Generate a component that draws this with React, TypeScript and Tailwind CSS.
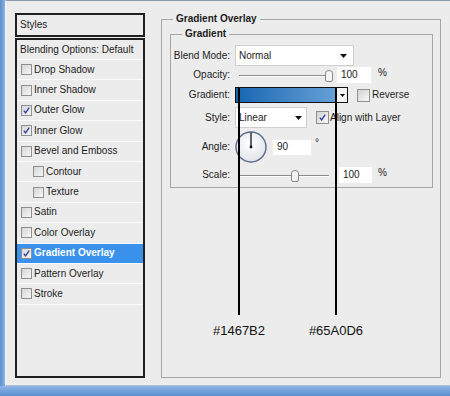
import React from "react";

type Item = { label: string; checked?: boolean; indent?: boolean; active?: boolean };

const items: Item[] = [
  { label: "Drop Shadow" },
  { label: "Inner Shadow" },
  { label: "Outer Glow", checked: true },
  { label: "Inner Glow", checked: true },
  { label: "Bevel and Emboss" },
  { label: "Contour", indent: true },
  { label: "Texture", indent: true },
  { label: "Satin" },
  { label: "Color Overlay" },
  { label: "Gradient Overlay", checked: true, active: true },
  { label: "Pattern Overlay" },
  { label: "Stroke" },
];

const CheckMark = () => (
  <svg viewBox="0 0 11 11" className="size-full">
    <path d="M2.2 5.6 L4.4 8.4 L8.8 2" fill="none" stroke="#2c3c9a" strokeWidth="1.6" />
  </svg>
);

const SmallBox = ({ checked }: { checked?: boolean }) => (
  <span className="flex size-[11px] shrink-0 border border-[#8f9090] bg-gradient-to-br from-[#d6d6d6] to-[#f6f6f6]">
    {checked && <CheckMark />}
  </span>
);

const BigBox = ({ checked }: { checked?: boolean }) => (
  <span className="flex size-[13px] shrink-0 border border-[#8f9090] bg-gradient-to-br from-[#d2d2d2] to-[#f8f8f8] p-[1px]">
    {checked && <CheckMark />}
  </span>
);

const Arrow = () => (
  <svg width="7" height="4" viewBox="0 0 7 4">
    <polygon points="0,0 7,0 3.5,4" fill="#111" />
  </svg>
);

// slider thumb, the little rounded knob
const Thumb = () => (
  <svg width="8" height="12" viewBox="0 0 8 12">
    <path d="M0.5 3 Q0.5 0.5 4 0.5 Q7.5 0.5 7.5 3 L7.5 10 Q7.5 11.5 6 11.5 L2 11.5 Q0.5 11.5 0.5 10 Z" fill="#f4f4f4" stroke="#8a8a8a" />
  </svg>
);

const Slider = ({ width, at }: { width: string; at: string }) => (
  <div className={`relative h-full ${width}`}>
    <div className="absolute left-0 right-0 top-[8px] h-[2px] border-t border-[#8c8c8c] border-b border-b-white" />
    <div className={`absolute top-[3px] ${at}`}>
      <Thumb />
    </div>
  </div>
);

const Label = ({ children }: { children: React.ReactNode }) => (
  <span className="w-[60px] shrink-0 pr-[1px] text-right">{children}</span>
);

export default function App() {
  return (
    <div className="flex h-[396px] w-[450px] flex-col overflow-hidden bg-[#6a9bd3] font-['Liberation_Sans',Arial,sans-serif] text-[10px] leading-[12px] text-[#1c1c1c]">
      <div className="flex h-[386px]">
        <div className="w-[5px] bg-gradient-to-r from-[#5b8fcd] to-[#8bb3e2]" />
        <div className="flex flex-1 border-t border-[#8b9aab] border-l border-l-[#f4f4f4] border-b border-b-[#b6c2cf] bg-[#ececec] pl-[9px] pt-[12px] pb-[7px]">
          {/* left: styles list */}
          <div className="flex w-[130px] flex-col">
            <div className="flex h-[24px] items-center border-2 border-[#202020] pl-[3px]">Styles</div>
            <div className="mt-[1px] flex flex-1 flex-col border-2 border-[#202020]">
              <div className="flex h-[20px] items-center border-b border-[#fafafa] pl-[3px]">Blending Options: Default</div>
              {items.map((it) => (
                <div
                  key={it.label}
                  className={`flex h-[20.4px] items-center gap-[2px] border-b border-[#fafafa] ${it.indent ? "pl-[16px]" : "pl-[4px]"} ${it.active ? "bg-[#3a92ec] font-bold text-white" : ""}`}
                >
                  <SmallBox checked={it.checked} />
                  <span>{it.label}</span>
                </div>
              ))}
            </div>
          </div>

          {/* right: gradient overlay panel */}
          <fieldset className="ml-[16px] w-[280px] border border-[#a6a6a6]">
            <legend className="ml-[11px] px-[3px] font-bold leading-[12px]">Gradient Overlay</legend>
            <div className="pl-[8px] pr-[7px] pt-[3px]">
              <fieldset className="border border-[#a6a6a6]">
                <legend className="ml-[11px] px-[3px] font-bold leading-[12px]">Gradient</legend>
                <div className="flex flex-col pt-[5px] pb-[4px]">
                  <div className="flex h-[21px] items-center">
                    <Label>Blend Mode:</Label>
                    <div className="ml-[4px] flex h-full w-[119px] items-center justify-between border border-[#cfcfcf] bg-white pl-[3px] pr-[6px]">
                      <span>Normal</span>
                      <Arrow />
                    </div>
                  </div>

                  <div className="mt-[1px] flex h-[16px] items-center">
                    <Label>Opacity:</Label>
                    <div className="ml-[8px] flex h-full">
                      <Slider width="w-[94px]" at="left-[86px]" />
                    </div>
                    <div className="ml-[4px] flex h-full w-[34px] items-center bg-white pl-[4px]">100</div>
                    <span className="ml-[7px] self-start">%</span>
                  </div>

                  <div className="mt-[4px] flex h-[16px] items-center">
                    <Label>Gradient:</Label>
                    <div className="relative ml-[4px] flex h-full w-[113px] border border-[#111]">
                      <div className="flex-1 bg-gradient-to-r from-[#1467B2] to-[#65A0D6]" />
                      <div className="flex w-[11px] items-center justify-center border-l border-[#444] bg-[#f4f4f4]">
                        <svg width="5" height="3" viewBox="0 0 5 3">
                          <polygon points="0,0 5,0 2.5,3" fill="#111" />
                        </svg>
                      </div>
                      <div className="absolute left-[2px] top-0 z-10 h-[227px] w-[1.5px] bg-black" />
                      <div className="absolute left-[99px] top-0 z-10 h-[227px] w-[1.5px] bg-black" />
                      <span className="absolute left-[3px] top-[235px] -translate-x-1/2 whitespace-nowrap text-[13px] leading-[15px] text-[#111]">#1467B2</span>
                      <span className="absolute left-[100px] top-[235px] -translate-x-1/2 whitespace-nowrap text-[13px] leading-[15px] text-[#111]">#65A0D6</span>
                    </div>
                    <span className="ml-[9px]">
                      <BigBox />
                    </span>
                    <span className="ml-[2px]">Reverse</span>
                  </div>

                  <div className="mt-[4px] flex h-[21px] items-center">
                    <Label>Style:</Label>
                    <div className="ml-[4px] flex h-full w-[72px] items-center justify-between border border-[#cfcfcf] bg-white pl-[3px] pr-[4px]">
                      <span>Linear</span>
                      <Arrow />
                    </div>
                    <span className="ml-[9px]">
                      <BigBox checked />
                    </span>
                    <span className="ml-[1px]">Align with Layer</span>
                  </div>

                  <div className="mt-[3px] flex h-[32px] items-center">
                    <Label>Angle:</Label>
                    <svg width="32" height="32" viewBox="0 0 32 32" className="ml-[4px]">
                      <defs>
                        <radialGradient id="dial" cx="0.45" cy="0.4" r="0.7">
                          <stop offset="0" stopColor="#ffffff" />
                          <stop offset="1" stopColor="#dcdfe6" />
                        </radialGradient>
                      </defs>
                      <circle cx="16" cy="16" r="15" fill="url(#dial)" stroke="#5b6a8a" strokeWidth="1.4" />
                      <line x1="16" y1="16" x2="16" y2="1.5" stroke="#111" strokeWidth="1.3" />
                      <circle cx="16" cy="16" r="1.4" fill="#111" />
                    </svg>
                    <div className="ml-[6px] flex h-[15px] w-[38px] items-center bg-white pl-[4px]">90</div>
                    <span className="ml-[4px] mb-[8px]">°</span>
                  </div>

                  <div className="mt-[4px] flex h-[16px] items-center">
                    <Label>Scale:</Label>
                    <div className="ml-[8px] flex h-full">
                      <Slider width="w-[90px]" at="left-[52px]" />
                    </div>
                    <div className="ml-[10px] flex h-full w-[33px] items-center bg-white pl-[4px]">100</div>
                    <span className="ml-[6px] self-start">%</span>
                  </div>
                </div>
              </fieldset>
            </div>
          </fieldset>
        </div>
      </div>
      <div className="h-[10px] bg-gradient-to-b from-[#8db5e4] to-[#5a8ed2]" />
    </div>
  );
}
